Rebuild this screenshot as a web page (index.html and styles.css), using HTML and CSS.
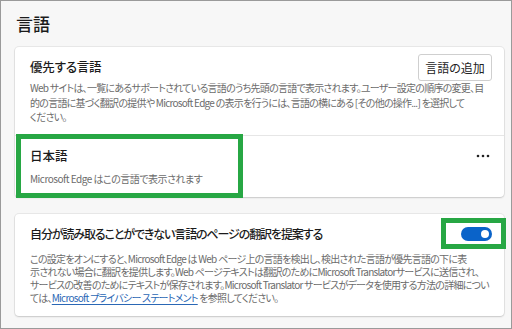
FILE: index.html
```html
<!DOCTYPE html>
<html lang="ja">
<head>
<meta charset="utf-8">
<link rel="stylesheet" href="styles.css">
</head>
<body>
<div class="frame">
  <h1 class="page-title">言語</h1>
  <section class="card card-langs">
    <div class="card-head">
      <h2 class="card-title">優先する言語</h2>
      <button class="btn">言語の追加</button>
    </div>
    <p class="desc">Web サイトは、一覧にあるサポートされている言語のうち先頭の言語で表示されます。ユーザー設定の順序の変更、目<br>的の言語に基づく翻訳の提供や Microsoft Edge の表示を行うには、言語の横にある [その他の操作...] を選択して<br>ください。</p>
    <div class="lang-row">
      <div class="lang-info">
        <div class="lang-name">日本語</div>
        <div class="lang-sub">Microsoft Edge はこの言語で表示されます</div>
      </div>
      <svg class="more" width="14" height="4" viewBox="0 0 14 4"><circle cx="2" cy="2" r="1.3"/><circle cx="7" cy="2" r="1.3"/><circle cx="12" cy="2" r="1.3"/></svg>
      <div class="highlight hl-lang"></div>
    </div>
  </section>
  <section class="card card-translate">
    <div class="card-head head-toggle">
      <h2 class="card-title title-long">自分が読み取ることができない言語のページの翻訳を提案する</h2>
      <div class="toggle"><span class="knob"></span></div>
      <div class="highlight hl-toggle"></div>
    </div>
    <p class="desc desc2">この設定をオンにすると、Microsoft Edge は Web ページ上の言語を検出し、検出された言語が優先言語の下に表<br>示されない場合に翻訳を提供します。Web ページテキストは翻訳のためにMicrosoft Translatorサービスに送信され、<br>サービスの改善のためにテキストが保存されます。Microsoft Translator サービスがデータを使用する方法の詳細につい<br>ては、<a class="link" href="#">Microsoft プライバシー ステートメント</a> を参照してください。</p>
  </section>
</div>
</body>
</html>
```
FILE: styles.css
```css
* { box-sizing: border-box; }
html, body { margin: 0; padding: 0; }
body {
  font-family: "Noto Sans CJK JP", "Noto Sans", sans-serif;
  font-feature-settings: "palt";
  color: #1b1b1b;
}
.frame {
  width: 512px;
  height: 329px;
  border: 1px solid #9a9a9a;
  background: #f7f7f7;
  padding: 0 7px 0 14px;
  overflow: hidden;
}
.page-title {
  margin: 0;
  padding: 10px 0 0 1px;
  height: 46px;
  font-size: 17px;
  font-weight: 500;
  line-height: 26px;
}
.card {
  position: relative;
  background: #fff;
  border-radius: 4px;
  box-shadow: 0 0 0 1px rgba(0,0,0,0.06), 0 1px 2px rgba(0,0,0,0.14);
}
.card-langs { height: 150px; }
.card-translate { margin-top: 17px; height: 102px; }
.card-head {
  position: relative;
  display: flex;
  align-items: center;
  justify-content: space-between;
  padding: 6px 12px 0 15px;
  height: 34px;
}
.card-title {
  margin: 0;
  font-size: 12.5px;
  font-weight: 500;
  line-height: 20px;
  letter-spacing: -0.2px;
}
.title-long { font-size: 12px; letter-spacing: -1.1px; }
.btn {
  font-family: inherit;
  font-feature-settings: "palt";
  font-size: 12px;
  color: #222;
  background: #fff;
  border: 1px solid #cfcfcf;
  border-radius: 3px;
  width: 74px;
  height: 27px;
  padding: 0;
}
.desc {
  margin: 0;
  padding: 0 12px 0 15px;
  font-size: 10px;
  line-height: 14.5px;
  letter-spacing: -0.75px;
  color: #6b6b6b;
  white-space: nowrap;
  height: 54px;
}
.lang-row {
  position: relative;
  border-top: 1px solid #e6e6e6;
  display: flex;
  justify-content: space-between;
  padding: 10px 14px 0 15px;
  height: 62px;
}
.lang-name {
  font-size: 12.5px;
  font-weight: 500;
  line-height: 20px;
}
.lang-sub {
  margin-top: 5px;
  font-size: 10px;
  line-height: 15px;
  letter-spacing: -0.5px;
  color: #6b6b6b;
}
.more {
  fill: #222;
  margin-top: 8px;
}
.head-toggle { padding-top: 10px; height: 38px; align-items: flex-start; }
.toggle {
  position: relative;
  width: 31px;
  height: 14px;
  border-radius: 7px;
  background: #0a63c9;
  margin-top: 3px;
}
.knob {
  position: absolute;
  right: 3px;
  top: 3px;
  width: 8px;
  height: 8px;
  border-radius: 50%;
  background: #fff;
}
.desc2 { height: auto; line-height: 13px; }
.link {
  display: inline-block;
  line-height: 13px;
  color: #2a67b5;
  text-decoration: underline;
  text-underline-offset: 2px;
}
.highlight {
  position: absolute;
  border: 5px solid #27a744;
  pointer-events: none;
}
.hl-lang { left: 1px; top: -2px; width: 227px; height: 64px; }
.hl-toggle { right: -2px; top: 4px; width: 65px; height: 31px; }
```
